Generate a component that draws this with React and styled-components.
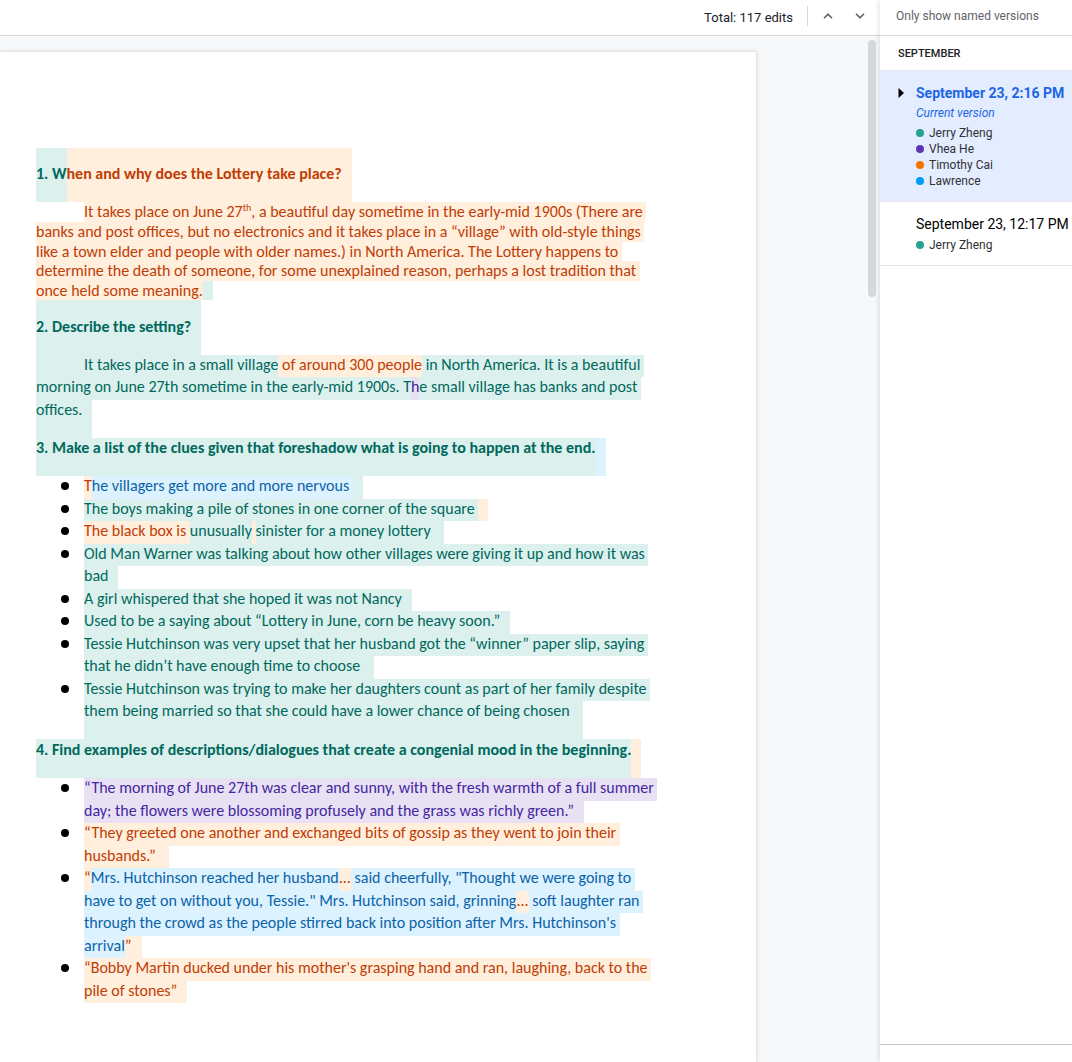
import React from "react";
import styled, { createGlobalStyle } from "styled-components";

const GlobalStyle = createGlobalStyle`
  *, *::before, *::after { box-sizing: border-box; }
  html, body, #root { height: 100%; }
  body {
    margin: 0;
    overflow: hidden;
    font-family: Roboto, "Liberation Sans", sans-serif;
    color: #202124;
    background: #fff;
  }
  h2, p, ul, li { margin: 0; padding: 0; list-style: none; }
  button {
    margin: 0;
    padding: 0;
    border: 0;
    background: none;
    font: inherit;
    color: inherit;
    cursor: pointer;
  }
`;

const authors = {
  teal: { dot: "#26a08f", mark: "#dcf0ee", text: "#00695c" },
  purple: { dot: "#5e35b1", mark: "#e8e1f4", text: "#4527a0" },
  orange: { dot: "#f57300", mark: "#ffefdc", text: "#bf3d06" },
  blue: { dot: "#039bf5", mark: "#ddf2ff", text: "#0a63a8" },
};

const Shell = styled.div`
  display: flex;
  min-height: 100vh;
`;

const Main = styled.main`
  flex: 1;
  min-width: 0;
  display: flex;
  flex-direction: column;
`;

const Toolbar = styled.header`
  display: flex;
  align-items: center;
  justify-content: flex-end;
  height: 36px;
  padding: 0 8px 3px 0;
  border-bottom: 1px solid #d6d8dd;
  font-size: 13px;
`;

const EditCount = styled.span`
  padding: 3px 14px 0 0;
  line-height: 20px;
`;

const Steps = styled.div`
  display: flex;
  gap: 8px;
  padding-left: 8px;
  border-left: 1px solid #d6d8dd;
`;

const StepButton = styled.button`
  display: grid;
  place-items: center;
  width: 24px;
  height: 20px;
`;

const Workspace = styled.div`
  flex: 1;
  display: flex;
  background: #f6f8fa;
`;

const Page = styled.article`
  flex: 1;
  min-width: 0;
  margin-top: 16px;
  padding: 96px 36px 0;
  background: #fff;
  box-shadow: 0 0 3px 1px rgba(60, 64, 67, 0.15);
  font-family: Carlito, Calibri, Lato, sans-serif;
  font-size: 16px;
  clip-path: inset(-4px -4px 0 0);
`;

const Gutter = styled.div`
  flex: 0 0 124px;
  display: flex;
  justify-content: flex-end;
  padding: 4px 4px 0 0;
`;

const Thumb = styled.div`
  width: 8px;
  height: 257px;
  border-radius: 4px;
  background: #d6d8de;
`;

const Heading = styled.h2`
  display: flex;
  height: ${(p) => p.$height}px;
  font-size: inherit;
  font-weight: 700;
  line-height: ${(p) => p.$lineHeight}px;
  white-space: pre;
`;

const Paragraph = styled.p`
  display: grid;
  grid-template-rows: ${(p) => p.$rows};
  line-height: 20px;
`;

const Line = styled.span`
  display: flex;
  white-space: pre;
  padding-left: ${(p) => (p.$indent ? 48 : 0)}px;
`;

const Clues = styled.ul`
  display: grid;
  grid-template-columns: 48px 1fr;
  grid-auto-rows: 23px 22px;
  line-height: 20px;
`;

const Clue = styled.li`
  display: contents;
`;

const Bullet = styled.span`
  grid-column: 1;
  width: 8px;
  height: 8px;
  margin: 6px 0 0 25px;
  border-radius: 50%;
  background: #000;
`;

const ClueLine = styled(Line)`
  grid-column: 2;
  height: ${(p) => (p.$tail ? "38px" : "auto")};
`;

const Run = styled.span`
  background: ${(p) => authors[p.$by].mark};
  color: ${(p) => authors[p.$by].text};
  min-width: ${(p) => p.$min || 0}px;

  sup {
    font-size: 10px;
    line-height: 0;
  }
`;

const Panel = styled.aside`
  flex: 0 0 192px;
  display: flex;
  flex-direction: column;
  background: #fff;
  box-shadow: 0 0 6px rgba(60, 64, 67, 0.2);
  white-space: nowrap;
  z-index: 1;
`;

const Filter = styled.div`
  height: 36px;
  padding: 6px 16px;
  border-bottom: 1px solid #d6d8dd;
  font-size: 12px;
  line-height: 20px;
  color: #5f6368;
`;

const Month = styled.h2`
  height: 35px;
  padding-left: 18px;
  border-bottom: 1px solid #e4e6ea;
  font-size: 11px;
  font-weight: 500;
  line-height: 35px;
`;

const Version = styled.section`
  display: grid;
  grid-template-columns: 18px 1fr;
  padding: 11px 0 12px 18px;
  border-bottom: 1px solid #e6e6e8;
  background: ${(p) => (p.$current ? "#e4ecff" : "#fff")};
`;

const VersionTitle = styled.button`
  grid-column: 2;
  justify-self: start;
  font-size: 14px;
  line-height: 22px;
  font-weight: ${(p) => (p.$current ? 700 : 400)};
  color: ${(p) => (p.$current ? "#1a66e5" : "#000")};
`;

const Current = styled.p`
  grid-column: 2;
  font-size: 12px;
  font-style: italic;
  line-height: 19px;
  color: #1a66e5;
`;

const Editors = styled.ul`
  grid-column: 2;
  padding-top: 2px;
`;

const Editor = styled.li`
  display: flex;
  align-items: center;
  gap: 5px;
  font-size: 12px;
  line-height: 16px;
  color: #303134;

  &::before {
    content: "";
    width: 8px;
    height: 8px;
    border-radius: 50%;
    background: ${(p) => authors[p.$by].dot};
  }
`;

const Expand = styled.button`
  display: flex;
  align-items: center;
  height: 22px;
`;

const PanelFooter = styled.footer`
  height: 18px;
  margin-top: auto;
  border-top: 1px solid #c4c4c4;
`;

const Chevron = ({ up }) => (
  <svg width="10" height="6" viewBox="0 0 10 6" fill="none" stroke="#5f6368" strokeWidth="1.6" aria-hidden="true">
    <path d={up ? "M1 5.2 5 1.2 9 5.2" : "M1 0.8 5 4.8 9 0.8"} />
  </svg>
);

const clues = [
  [[["orange", "T"], ["blue", "he villagers get more and more nervous "], ["teal", "", 10]]],
  [[["teal", "The boys making a pile of stones in one corner of the square "], ["orange", "", 10]]],
  [[["orange", "The black box is "], ["teal", "unusually"], ["orange", " "], ["teal", "sinister for a money lottery "], ["teal", "", 10]]],
  [
    [["teal", "Old Man Warner was talking about how other villages were giving it up and how it was "]],
    [["teal", "bad"], ["teal", "", 10]],
  ],
  [[["teal", "A girl whispered that she hoped it was not Nancy"], ["teal", "", 10]]],
  [[["teal", "Used to be a saying about “Lottery in June, corn be heavy soon.”"], ["teal", "", 10]]],
  [
    [["teal", "Tessie Hutchinson was very upset that her husband got the “winner” paper slip, saying "]],
    [["teal", "that he didn’t have enough time to choose "], ["teal", "", 10]],
  ],
  [
    [["teal", "Tessie Hutchinson was trying to make her daughters count as part of her family despite "]],
    [["teal", "them being married so that she could have a lower chance of being chosen "], ["teal", "", 10]],
  ],
];

const quotes = [
  [
    [["purple", "“The morning of June 27th was clear and sunny, with the fresh warmth of a full summer "]],
    [["purple", "day; the flowers were blossoming profusely and the grass was richly green.”"], ["purple", "", 10]],
  ],
  [
    [["orange", "“They greeted one another and exchanged bits of gossip as they went to join their "]],
    [["orange", "husbands.” "], ["orange", "", 10]],
  ],
  [
    [["orange", "“"], ["blue", "Mrs. Hutchinson reached her husband"], ["orange", "..."], ["blue", " said cheerfully, \"Thought we were going to "]],
    [["blue", "have to get on without you, Tessie.\" Mrs. Hutchinson said, grinning"], ["orange", "..."], ["blue", " soft laughter ran "]],
    [["blue", "through the crowd as the people stirred back into position after Mrs. Hutchinson's "]],
    [["blue", "arrival"], ["orange", "”"], ["orange", "", 10]],
  ],
  [
    [["orange", "“Bobby Martin ducked under his mother's grasping hand and ran, laughing, back to the "]],
    [["orange", "pile of stones”"], ["orange", "", 10]],
  ],
];

const Runs = ({ runs }) =>
  runs.map(([by, text, min], i) => (
    <Run key={i} $by={by} $min={min}>
      {text}
    </Run>
  ));

const ClueList = ({ items, tail }) => (
  <Clues>
    {items.map((lines, i) => (
      <Clue key={i}>
        <Bullet />
        {lines.map((runs, j) => (
          <ClueLine key={j} $tail={tail && i === items.length - 1 && j === lines.length - 1}>
            <Runs runs={runs} />
          </ClueLine>
        ))}
      </Clue>
    ))}
  </Clues>
);

const ClueBlock = styled.div`
  height: 263px;
`;

export default function App() {
  return (
    <>
      <GlobalStyle />
      <Shell>
        <Main>
          <Toolbar>
            <EditCount>Total: 117 edits</EditCount>
            <Steps>
              <StepButton aria-label="Previous edit"><Chevron up /></StepButton>
              <StepButton aria-label="Next edit"><Chevron /></StepButton>
            </Steps>
          </Toolbar>
          <Workspace>
            <Page>
              <Heading $height={54} $lineHeight={52}>
                <Runs runs={[["teal", "1. W"], ["orange", "hen and why does the Lottery take place?"], ["orange", "", 10]]} />
              </Heading>
              <Paragraph $rows="20px 20px 19px 20px 19px">
                <Line $indent>
                  <Run $by="orange">
                    It takes place on June 27<sup>th</sup>, a beautiful day sometime in the early-mid 1900s (There are{" "}
                  </Run>
                </Line>
                <Line><Run $by="orange">{"banks and post offices, but no electronics and it takes place in a “village” with old-style things "}</Run></Line>
                <Line><Run $by="orange">{"like a town elder and people with older names.) in North America. The Lottery happens to "}</Run></Line>
                <Line><Run $by="orange">{"determine the death of someone, for some unexplained reason, perhaps a lost tradition that "}</Run></Line>
                <Line><Runs runs={[["orange", "once held some meaning."], ["teal", "", 10]]} /></Line>
              </Paragraph>
              <Heading $height={55} $lineHeight={54}>
                <Runs runs={[["teal", "2. Describe the setting?"], ["teal", "", 10]]} />
              </Heading>
              <Paragraph $rows="22px 23px 38px">
                <Line>
                  <Runs runs={[["teal", "", 48], ["teal", "It takes place in a small village"], ["orange", " of around 300 people"], ["teal", " in North America. It is a beautiful "]]} />
                </Line>
                <Line><Runs runs={[["teal", "morning on June 27th sometime in the early-mid 1900s. T"], ["purple", "h"], ["teal", "e small village has banks and post "]]} /></Line>
                <Line><Runs runs={[["teal", "offices."], ["teal", "", 10]]} /></Line>
              </Paragraph>
              <Heading $height={38} $lineHeight={20}>
                <Runs runs={[["teal", "3. Make a list of the clues given that foreshadow what is going to happen at the end."], ["blue", "", 10]]} />
              </Heading>
              <ClueBlock>
                <ClueList items={clues} tail />
              </ClueBlock>
              <Heading $height={39} $lineHeight={22}>
                <Runs runs={[["teal", "4. Find examples of descriptions/dialogues that create a congenial mood in the beginning."], ["orange", "", 10]]} />
              </Heading>
              <ClueList items={quotes} />
            </Page>
            <Gutter><Thumb /></Gutter>
          </Workspace>
        </Main>
        <Panel>
          <Filter>Only show named versions</Filter>
          <Month>SEPTEMBER</Month>
          <Version $current>
            <Expand aria-label="Expand version">
              <svg width="6" height="10" viewBox="0 0 6 10" aria-hidden="true"><path d="M0.5 0 6 5 0.5 10z" /></svg>
            </Expand>
            <VersionTitle $current>September 23, 2:16 PM</VersionTitle>
            <Current>Current version</Current>
            <Editors>
              <Editor $by="teal">Jerry Zheng</Editor>
              <Editor $by="purple">Vhea He</Editor>
              <Editor $by="orange">Timothy Cai</Editor>
              <Editor $by="blue">Lawrence</Editor>
            </Editors>
          </Version>
          <Version>
            <VersionTitle>September 23, 12:17 PM</VersionTitle>
            <Editors>
              <Editor $by="teal">Jerry Zheng</Editor>
            </Editors>
          </Version>
          <PanelFooter />
        </Panel>
      </Shell>
    </>
  );
}
